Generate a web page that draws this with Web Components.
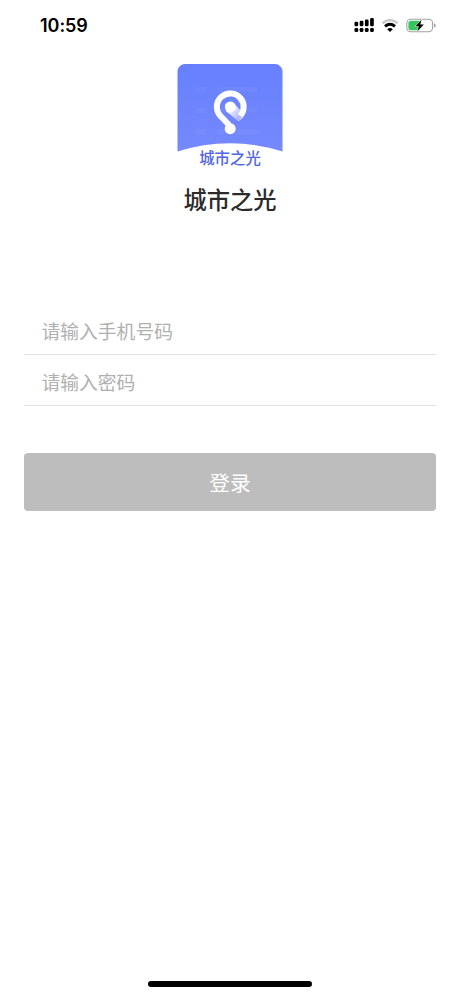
<!DOCTYPE html>
<html lang="zh-CN"><head><meta charset="utf-8"><title>城市之光</title>
<style>html,body{margin:0;background:#fff}body{font-family:"Noto Sans CJK SC",sans-serif}</style></head>
<body><login-screen></login-screen>
<script>
const define = (name, markup) => {
  const t = document.createElement('template');
  t.innerHTML = markup;
  customElements.define(name, class extends HTMLElement {
    constructor() { super(); this.attachShadow({mode:'open'}).append(t.content.cloneNode(true)); }
  });
};
define('status-bar', `<style>
:host{display:flex;box-sizing:border-box;height:51px;padding:0 24px 0 40px;align-items:center;justify-content:space-between;color:#000}
time{font:600 18px/24px Inter,sans-serif;letter-spacing:-.05px}
svg{display:block}
</style><time>10:59</time>
<svg width="83" height="18" viewBox="353 17 83 18">
<g fill="#000"><rect x="354.5" y="21.7" width="3.7" height="4.6" rx="1.3"/><rect x="359.7" y="20.8" width="3.7" height="5.5" rx="1.3"/><rect x="364.9" y="19.5" width="3.7" height="6.8" rx="1.3"/><rect x="370.1" y="18" width="3.7" height="8.3" rx="1.3"/>
<rect x="354.5" y="28" width="3.7" height="4" rx="1.3"/><rect x="359.7" y="28" width="3.7" height="4" rx="1.3"/><rect x="364.9" y="28" width="3.7" height="4" rx="1.3"/><rect x="370.1" y="28" width="3.7" height="4" rx="1.3"/></g>
<path d="M382.4 23.2Q390 16.8 397.6 23.2" fill="none" stroke="#c8c8c8" stroke-width="2.6"/>
<path d="M385 26.4Q390 22.2 395 26.4" fill="none" stroke="#000" stroke-width="2.9"/>
<path d="M387.2 29.2Q390 27 392.8 29.2L390 32Z"/>
<rect x="406.8" y="19.2" width="25.8" height="12.6" rx="4" fill="#fff" stroke="#a2a2a2" stroke-width="1.1"/>
<path d="M411.2 20.8H419.5V30.2H411.2Q408.4 30.2 408.4 27.4V23.6Q408.4 20.8 411.2 20.8Z" fill="#35c75b"/>
<path d="M434 23.2Q435.7 23.8 435.7 25.5T434 27.8Z" fill="#a2a2a2"/>
<path d="M421.4 19.8L415.4 26.2H418.8L417.4 31.2L423.9 24.6H420.3Z" fill="#000" stroke="#fff" stroke-width="1" paint-order="stroke"/>
</svg>`);
define('app-logo', `<style>
:host{display:grid;width:106px;height:105px;margin:13px auto 0}
svg,span{grid-area:1/1}svg{display:block}
span{align-self:end;margin-bottom:1px;text-align:center;font-size:15.4px;font-weight:500;line-height:22px;color:#5265e3}
</style><svg width="106" height="105" viewBox="177 64 106 105">
<defs><linearGradient id="bg" x2="0" y2="1"><stop stop-color="#6680ff"/><stop offset="1" stop-color="#7689fd"/></linearGradient>
<linearGradient id="fold" gradientUnits="userSpaceOnUse" x1="229" y1="108" x2="239" y2="118"><stop stop-color="#fff"/><stop offset="1" stop-color="#aab5ff"/></linearGradient></defs>
<path d="M177.5 71.5a7.5 7.5 0 0 1 7.5-7.5H275a7.5 7.5 0 0 1 7.5 7.5V151.5Q230 135 177.5 151.5Z" fill="url(#bg)"/>
<g fill="#fff" opacity=".035"><rect x="196" y="87" width="10" height="5"/><rect x="217" y="87" width="40" height="5"/><rect x="196" y="108" width="10" height="5"/><rect x="217" y="108" width="40" height="5"/><rect x="196" y="129" width="10" height="5"/><rect x="217" y="129" width="40" height="5"/></g>
<path d="M226 111L234.5 104L241.5 111.5L243 117L238.8 121.5Z" fill="url(#fold)"/>
<path d="M238.6 117.3A13.4 13.4 0 1 0 220.3 115.8L229.3 125.3" fill="none" stroke="#fff" stroke-width="6"/>
<path d="M226 111L230.3 107L238.2 114.4L242 116.9L238.8 121.5Z" fill="url(#fold)"/>
<path d="M228.5 122.1L234.2 126.2L229.5 129Z" fill="#fff"/>
<circle cx="230.3" cy="106.9" r="5.5" fill="#fff"/><circle cx="230.2" cy="128.7" r="5.5" fill="#fff"/>
</svg><span><slot></slot></span>`);
define('login-field', `<style>
:host{display:flex;box-sizing:border-box;align-items:center;height:51px;padding:3px 17.5px 0;border-bottom:1px solid #e3e3e3;font-size:18.8px;line-height:28px;font-weight:400;color:#b0b0b0}
</style><slot></slot>`);
define('login-button', `<style>
:host{display:block;margin-top:47px}
button{display:block;width:100%;height:58px;padding:0 0 1px;border:0;border-radius:4px;background:#bdbdbd;color:#fff;font:400 20.7px/56px "Noto Sans CJK SC",sans-serif}
</style><button disabled><slot></slot></button>`);
define('login-screen', `<style>
:host{display:flex;box-sizing:border-box;flex-direction:column;height:996px;padding-bottom:9px;background:#fff}
h1{margin:13px 0 0;text-align:center;font-size:23.3px;font-weight:500;line-height:34px;color:#2b2b2b}
main{padding:0 24px;margin-top:88px}
i{display:block;width:164px;height:6px;border-radius:3px;background:#000;margin:auto auto 0}
</style><status-bar></status-bar><app-logo>城市之光</app-logo><h1>城市之光</h1>
<main><login-field>请输入手机号码</login-field><login-field>请输入密码</login-field><login-button>登录</login-button></main><i></i>`);
</script></body></html>
